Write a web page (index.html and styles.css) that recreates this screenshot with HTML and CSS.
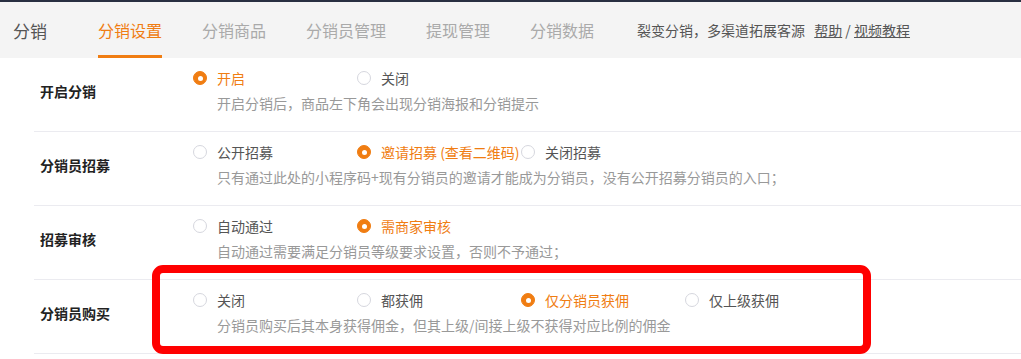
FILE: index.html
```html
<!DOCTYPE html>
<html>
<head>
    <title>分销设置</title>
    <meta name="viewport" content="width=device-width, initial-scale=1">
    <link rel="stylesheet" href="styles.css">
</head>
<body>

<!-- Top strip + tab header -->
<div class="topbar"></div>
<div class="header">
    <div class="title">分销</div>
    <div class="tab active">分销设置</div>
    <div class="tab">分销商品</div>
    <div class="tab">分销员管理</div>
    <div class="tab">提现管理</div>
    <div class="tab">分销数据</div>
    <div class="desc">
        裂变分销，多渠道拓展客源
        <span class="links"><a href="#">帮助</a> / <a href="#">视频教程</a></span>
    </div>
</div>

<!-- Settings form -->
<div class="form">
    <div class="row">
        <div class="label">开启分销</div>
        <div class="field">
            <div class="options">
                <label class="option checked"><span class="radio"></span>开启</label>
                <label class="option"><span class="radio"></span>关闭</label>
            </div>
            <div class="hint">开启分销后，商品左下角会出现分销海报和分销提示</div>
        </div>
    </div>

    <div class="row">
        <div class="label">分销员招募</div>
        <div class="field">
            <div class="options">
                <label class="option"><span class="radio"></span>公开招募</label>
                <label class="option checked"><span class="radio"></span>邀请招募 (查看二维码)</label>
                <label class="option"><span class="radio"></span>关闭招募</label>
            </div>
            <div class="hint">只有通过此处的小程序码+现有分销员的邀请才能成为分销员，没有公开招募分销员的入口；</div>
        </div>
    </div>

    <div class="row">
        <div class="label">招募审核</div>
        <div class="field">
            <div class="options">
                <label class="option"><span class="radio"></span>自动通过</label>
                <label class="option checked"><span class="radio"></span>需商家审核</label>
            </div>
            <div class="hint">自动通过需要满足分销员等级要求设置，否则不予通过；</div>
        </div>
    </div>

    <div class="row">
        <div class="label">分销员购买</div>
        <div class="field">
            <div class="options">
                <label class="option"><span class="radio"></span>关闭</label>
                <label class="option"><span class="radio"></span>都获佣</label>
                <label class="option checked"><span class="radio"></span>仅分销员获佣</label>
                <label class="option"><span class="radio"></span>仅上级获佣</label>
            </div>
            <div class="hint">分销员购买后其本身获得佣金，但其上级/间接上级不获得对应比例的佣金</div>
        </div>
    </div>
</div>

<!-- Red highlight drawn over the last row -->
<div class="highlight"></div>

</body>
</html>
```

FILE: styles.css
```css
/* Reset */
* {
    margin: 0;
    padding: 0;
    box-sizing: border-box;
    font-family: "Noto Sans CJK SC", "Liberation Sans", sans-serif;
}

body {
    background: #ffffff;
    color: #333;
    position: relative;
    overflow: hidden;
}

/* Header */
.topbar {
    height: 2px;
    background: #282f41;
}

.header {
    display: flex;
    align-items: center;
    height: 56px;
    padding-left: 13px;
    background: #f4f4f4;
}

.title {
    font-size: 17px;
    color: #555;
    margin-right: 51px;
}

.tab {
    display: flex;
    align-items: center;
    height: 100%;
    font-size: 16px;
    color: #aaa;
    margin-right: 40px;
    border-top: 3px solid transparent;
    border-bottom: 3px solid transparent;
}

.tab.active {
    color: #f07d12;
    border-bottom-color: #f07d12;
}

.desc {
    font-size: 14px;
    color: #555;
    margin-left: 3px;
}

.desc .links {
    margin-left: 6px;
}

.desc a {
    color: #555;
    text-decoration: underline;
}

/* Form rows */
.form {
    padding-left: 34px;
}

.row {
    display: flex;
    height: 74px;
    border-bottom: 1px solid #ebebf0;
    padding-top: 9px;
}

.label {
    width: 159px;
    padding-left: 6px;
    margin-top: 13px;
    font-size: 14px;
    font-weight: bold;
    line-height: 22px;
    color: #222;
}

.options {
    display: flex;
    height: 22px;
}

.option {
    display: flex;
    align-items: center;
    min-width: 164px;
    font-size: 14px;
    line-height: 22px;
    color: #555;
    white-space: nowrap;
}

.option.checked {
    color: #f07d12;
}

.radio {
    width: 14px;
    height: 14px;
    border: 1px solid #d6d7de;
    border-radius: 50%;
    margin-right: 10px;
    position: relative;
}

.option.checked .radio {
    background: #f07d12;
    border-color: #f07d12;
}

.option.checked .radio::after {
    content: "";
    position: absolute;
    left: 3.5px;
    top: 3.5px;
    width: 5px;
    height: 5px;
    border-radius: 50%;
    background: #fff;
}

.hint {
    margin-top: 3px;
    padding-left: 24px;
    font-size: 14px;
    line-height: 22px;
    color: #999;
}

/* Red annotation frame */
.highlight {
    position: absolute;
    left: 152px;
    top: 265px;
    width: 719px;
    height: 89px;
    border: 8px solid #ff0000;
    border-radius: 11px;
}
```
